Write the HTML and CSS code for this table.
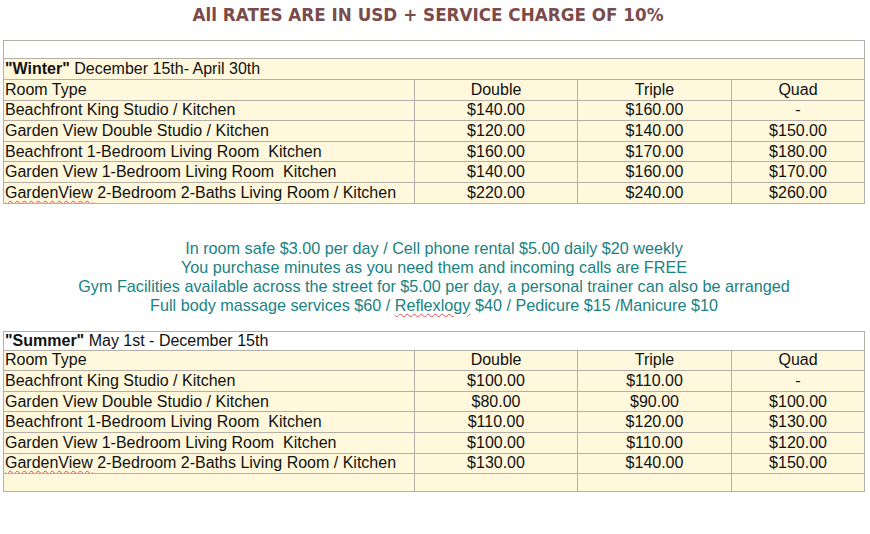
FILE: index.html
```html
<!DOCTYPE html>
<html lang="en">
<head>
<meta charset="utf-8">
<title>Rates</title>
<link rel="stylesheet" href="styles.css">
</head>
<body>
<div class="page">
  <h1 class="title">All RATES ARE IN USD + SERVICE CHARGE OF 10%</h1>

  <table class="rates">
    <colgroup>
      <col class="c-type"><col class="c-double"><col class="c-triple"><col class="c-quad">
    </colgroup>
    <tr class="blank"><td colspan="4"></td></tr>
    <tr class="season cream"><td colspan="4"><b>"Winter"</b> December 15th- April 30th</td></tr>
    <tr><td>Room Type</td><td class="n">Double</td><td class="n">Triple</td><td class="n">Quad</td></tr>
    <tr><td>Beachfront King Studio / Kitchen</td><td class="n">$140.00</td><td class="n">$160.00</td><td class="n">-</td></tr>
    <tr><td>Garden View Double Studio / Kitchen</td><td class="n">$120.00</td><td class="n">$140.00</td><td class="n">$150.00</td></tr>
    <tr><td>Beachfront 1-Bedroom Living Room&nbsp; Kitchen</td><td class="n">$160.00</td><td class="n">$170.00</td><td class="n">$180.00</td></tr>
    <tr><td>Garden View 1-Bedroom Living Room&nbsp; Kitchen</td><td class="n">$140.00</td><td class="n">$160.00</td><td class="n">$170.00</td></tr>
    <tr><td><span class="spell">GardenView</span> 2-Bedroom 2-Baths Living Room / Kitchen</td><td class="n">$220.00</td><td class="n">$240.00</td><td class="n">$260.00</td></tr>
  </table>

  <div class="notes">
    <p>In room safe $3.00 per day / Cell phone rental $5.00 daily $20 weekly</p>
    <p>You purchase minutes as you need them and incoming calls are FREE</p>
    <p>Gym Facilities available across the street for $5.00 per day, a personal trainer can also be arranged</p>
    <p>Full body massage services $60 / <span class="spell">Reflexlogy</span> $40 / Pedicure $15 /Manicure $10</p>
  </div>

  <table class="rates summer">
    <colgroup>
      <col class="c-type"><col class="c-double"><col class="c-triple"><col class="c-quad">
    </colgroup>
    <tr class="season white"><td colspan="4"><b>"Summer"</b> May 1st - December 15th</td></tr>
    <tr><td>Room Type</td><td class="n">Double</td><td class="n">Triple</td><td class="n">Quad</td></tr>
    <tr><td>Beachfront King Studio / Kitchen</td><td class="n">$100.00</td><td class="n">$110.00</td><td class="n">-</td></tr>
    <tr><td>Garden View Double Studio / Kitchen</td><td class="n">$80.00</td><td class="n">$90.00</td><td class="n">$100.00</td></tr>
    <tr><td>Beachfront 1-Bedroom Living Room&nbsp; Kitchen</td><td class="n">$110.00</td><td class="n">$120.00</td><td class="n">$130.00</td></tr>
    <tr><td>Garden View 1-Bedroom Living Room&nbsp; Kitchen</td><td class="n">$100.00</td><td class="n">$110.00</td><td class="n">$120.00</td></tr>
    <tr><td><span class="spell">GardenView</span> 2-Bedroom 2-Baths Living Room / Kitchen</td><td class="n">$130.00</td><td class="n">$140.00</td><td class="n">$150.00</td></tr>
    <tr class="empty"><td></td><td></td><td></td><td></td></tr>
  </table>
</div>
</body>
</html>
```
FILE: styles.css
```css
html, body {
  margin: 0;
  padding: 0;
  background: #ffffff;
}

.page {
  padding: 0 0 0 3px;
  font-family: "Liberation Sans", Arial, sans-serif;
  color: #111111;
}

.title {
  margin: 0;
  height: 40px;
  line-height: 30px;
  width: 850px;
  text-align: center;
  font-family: "DejaVu Sans", Verdana, sans-serif;
  font-weight: bold;
  font-size: 16.8px;
  color: #7b4b4b;
}

.rates {
  border-collapse: collapse;
  table-layout: fixed;
  width: 861px;
  font-size: 16px;
}

.c-type { width: 411px; }
.c-double { width: 163px; }
.c-triple { width: 154px; }
.c-quad { width: 133px; }

.rates td {
  border: 1px solid #b4b0a8;
  background: #fff8dc;
  padding: 0 0 0 1px;
  height: 19.6px;
  line-height: 18px;
  white-space: nowrap;
  overflow: hidden;
}

.rates td.n {
  text-align: center;
  padding: 0;
}

.rates tr.blank td {
  background: #ffffff;
  height: 17px;
}

.rates tr.season td {
  height: 20px;
}

.rates tr.white td {
  background: #ffffff;
  height: 18px;
}

.rates tr.empty td {
  height: 17px;
}

.spell {
  text-decoration: underline wavy #e05050;
  text-decoration-thickness: 1px;
  text-underline-offset: 2px;
}

.notes {
  margin: 35px 0 16px 0;
  width: 862px;
  text-align: center;
  color: #1a8282;
  font-size: 16.2px;
  line-height: 19px;
}

.notes p {
  margin: 0;
}
```
